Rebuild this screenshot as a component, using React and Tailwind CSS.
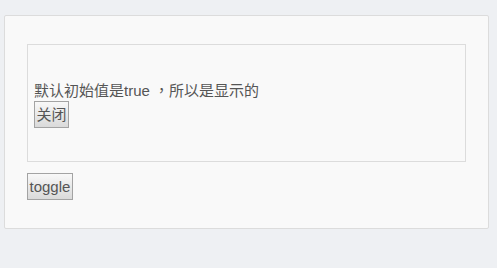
import React, { useState } from "react";

const btn =
  "block border border-[#a3a3a3] bg-gradient-to-b from-[#f8f8f8] to-[#dadada] px-[1.5px] text-[15px] leading-[25px] text-[#555]";

const App = () => {
  const [show, setShow] = useState(true);

  return (
    <div
      className="min-h-[268px] bg-[#eef0f3] pl-[4px] pr-[8px] pt-[15px]"
      style={{ fontFamily: '"Liberation Sans", "Noto Sans CJK TC", sans-serif' }}
    >
      <div className="rounded-[2px] border border-[#dcdcdc] bg-[#f9f9f9] px-[22px] pt-[28px] pb-[28px]">
        <div className="h-[118px] border border-[#dcdcdc] pl-[6px] pt-[35px]">
          {show && (
            <>
              <p className="text-[15px] leading-[21px] text-[#555]">默认初始值是true ，所以是显示的</p>
              <button className={btn} onClick={() => setShow(false)}>
                关闭
              </button>
            </>
          )}
        </div>
        <button className={`${btn} mt-[11px]`} onClick={() => setShow(!show)}>
          toggle
        </button>
      </div>
    </div>
  );
};

export default App;
